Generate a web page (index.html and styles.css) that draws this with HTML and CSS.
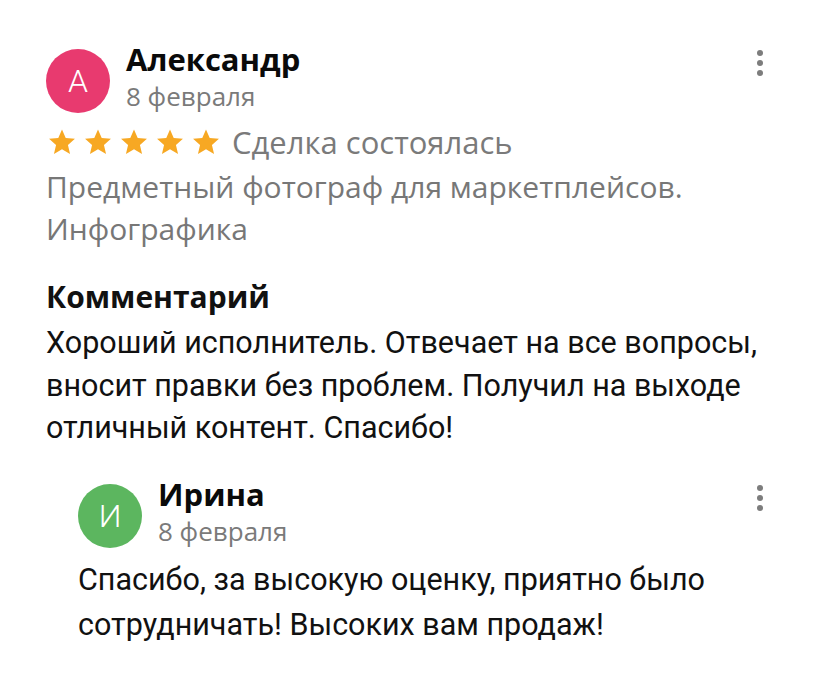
FILE: index.html
```html
<!DOCTYPE html>
<html lang="ru">
<head>
<meta charset="utf-8">
<link rel="stylesheet" href="styles.css">
</head>
<body>
<div class="review">
  <div class="head">
    <div class="avatar avatar-pink">А</div>
    <div class="meta">
      <div class="name">Александр</div>
      <div class="date">8 февраля</div>
    </div>
    <button class="menu" aria-label="Меню"><span></span><span></span><span></span></button>
  </div>
  <div class="rating">
    <div class="stars">
      <svg class="star" viewBox="0 0 24 24"><path d="M12 1.2l3.2 7.3 7.9.7-6 5.3 1.8 7.8L12 18.2l-6.9 4.1 1.8-7.8-6-5.3 7.9-.7z"/></svg>
      <svg class="star" viewBox="0 0 24 24"><path d="M12 1.2l3.2 7.3 7.9.7-6 5.3 1.8 7.8L12 18.2l-6.9 4.1 1.8-7.8-6-5.3 7.9-.7z"/></svg>
      <svg class="star" viewBox="0 0 24 24"><path d="M12 1.2l3.2 7.3 7.9.7-6 5.3 1.8 7.8L12 18.2l-6.9 4.1 1.8-7.8-6-5.3 7.9-.7z"/></svg>
      <svg class="star" viewBox="0 0 24 24"><path d="M12 1.2l3.2 7.3 7.9.7-6 5.3 1.8 7.8L12 18.2l-6.9 4.1 1.8-7.8-6-5.3 7.9-.7z"/></svg>
      <svg class="star" viewBox="0 0 24 24"><path d="M12 1.2l3.2 7.3 7.9.7-6 5.3 1.8 7.8L12 18.2l-6.9 4.1 1.8-7.8-6-5.3 7.9-.7z"/></svg>
    </div>
    <span class="deal">Сделка состоялась</span>
  </div>
  <p class="desc">Предметный фотограф для маркетплейсов.<br>Инфографика</p>
  <h2 class="title">Комментарий</h2>
  <p class="text">Хороший исполнитель. Отвечает на все вопросы,<br>вносит правки без проблем. Получил на выходе<br>отличный контент. Спасибо!</p>

  <div class="reply">
    <div class="head">
      <div class="avatar avatar-green">И</div>
      <div class="meta">
        <div class="name">Ирина</div>
        <div class="date">8 февраля</div>
      </div>
      <button class="menu" aria-label="Меню"><span></span><span></span><span></span></button>
    </div>
    <p class="text reply-text">Спасибо, за высокую оценку, приятно было<br>сотрудничать! Высоких вам продаж!</p>
  </div>
</div>
</body>
</html>
```

FILE: styles.css
```css
* { box-sizing: border-box; }
html, body { margin: 0; padding: 0; background: #fff; }
body {
  font-family: Roboto, "Liberation Sans", sans-serif;
  color: #111;
  width: 828px;
}
.review {
  padding: 41px 58px 0 46px;
}
.head {
  display: flex;
  align-items: flex-start;
}
.avatar {
  width: 64px;
  height: 64px;
  border-radius: 50%;
  flex: none;
  margin-top: 8px;
  display: flex;
  align-items: center;
  justify-content: center;
  color: #fff;
  font-size: 32px;
  font-weight: 300;
}
.avatar-pink { background: #e83a6f; }
.avatar-green { background: #5cb65f; }
.meta {
  margin-left: 16px;
  flex: 1;
}
.name {
  font-family: "Open Sans", Roboto, sans-serif;
  font-size: 31px;
  font-weight: 700;
  line-height: 36px;
  color: #0a0a0a;
}
.date {
  font-family: "Open Sans", Roboto, sans-serif;
  font-size: 26px;
  line-height: 30px;
  margin-top: 4px;
  color: #7a7a7a;
}
.menu {
  flex: none;
  width: 20px;
  margin: 9px 0 0 0;
  padding: 0;
  border: 0;
  background: none;
  display: flex;
  flex-direction: column;
  align-items: center;
  gap: 4px;
}
.menu span {
  width: 6px;
  height: 6px;
  border-radius: 50%;
  background: #7d7d7d;
}
.rating {
  display: flex;
  align-items: center;
  margin-top: 14px;
  height: 30px;
}
.stars {
  display: flex;
  gap: 8px;
  margin-left: 2px;
}
.star {
  width: 28px;
  height: 28px;
  fill: #f7a823;
}
.deal {
  font-family: "Open Sans", Roboto, sans-serif;
  margin-left: 12px;
  font-size: 31px;
  line-height: 30px;
  color: #7a7a7a;
}
.desc {
  font-family: "Open Sans", Roboto, sans-serif;
  margin: 9px 0 0;
  font-size: 30px;
  line-height: 41.5px;
  color: #777;
}
.title {
  font-family: "Open Sans", Roboto, sans-serif;
  margin: 31px 0 0;
  font-size: 30px;
  font-weight: 700;
  line-height: 34px;
}
.text {
  margin: 8px 0 0;
  font-size: 30.5px;
  line-height: 42.5px;
  color: #111;
}
.reply {
  margin-left: 32px;
  margin-top: 26px;
}
.reply-text {
  margin-top: 9px;
  line-height: 45px;
}
```
